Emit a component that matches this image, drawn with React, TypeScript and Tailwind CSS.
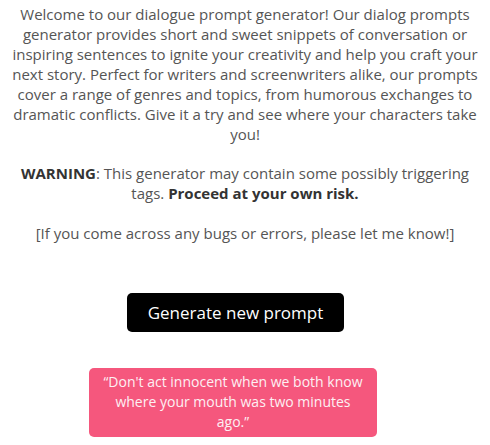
import React from "react";

export default function App() {
  const font = { fontFamily: '"Open Sans", "Liberation Sans", sans-serif' };
  return (
    <div className="w-[490px] h-[445px] bg-white overflow-hidden" style={font}>
      <div className="flex flex-col items-center pt-[4px]">
        <p className="text-[15px] leading-[20px] text-[#555555] text-center whitespace-nowrap">
          Welcome to our dialogue prompt generator! Our dialog prompts
          <br />
          generator provides short and sweet snippets of conversation or
          <br />
          inspiring sentences to ignite your creativity and help you craft your
          <br />
          next story. Perfect for writers and screenwriters alike, our prompts
          <br />
          cover a range of genres and topics, from humorous exchanges to
          <br />
          dramatic conflicts. Give it a try and see where your characters take
          <br />
          you!
        </p>
        <p className="mt-[19px] text-[15px] leading-[20px] text-[#555555] text-center whitespace-nowrap">
          <strong className="font-bold text-[#333333]">WARNING</strong>: This generator may contain some possibly triggering
          <br />
          tags. <strong className="font-bold text-[#333333]">Proceed at your own risk.</strong>
        </p>
        <p className="mt-[20px] text-[15px] leading-[20px] text-[#555555] text-center whitespace-nowrap">
          [If you come across any bugs or errors, please let me know!]
        </p>
        <button className="mt-[50px] ml-[-19px] w-[217px] h-[39px] rounded-[5px] bg-black text-white text-[17px] leading-none">
          Generate new prompt
        </button>
        <div className="mt-[36px] ml-[-24px] w-[288px] h-[69px] rounded-[5px] bg-[#f5577d] text-[#fdf0f3] text-[14px] leading-[20px] text-center pt-[4px] whitespace-nowrap">
          “Don't act innocent when we both know
          <br />
          where your mouth was two minutes
          <br />
          ago.”
        </div>
      </div>
    </div>
  );
}
